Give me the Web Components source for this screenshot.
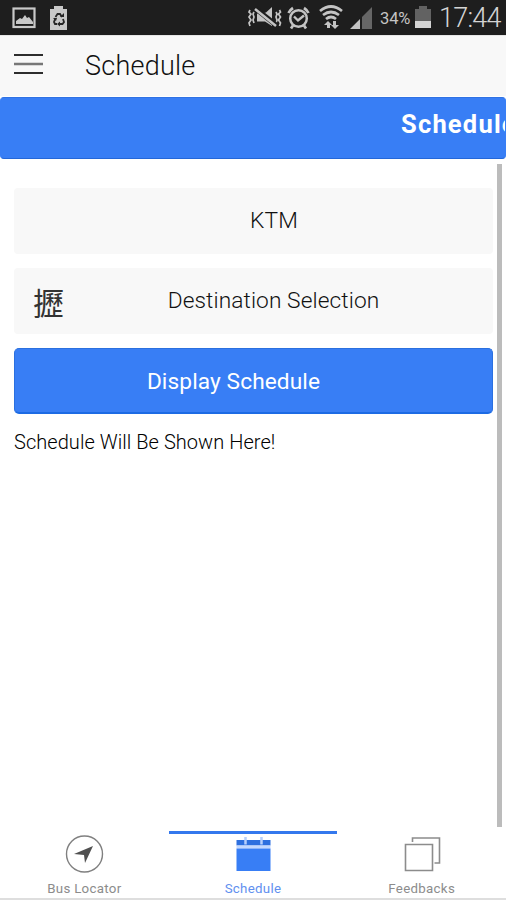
<!DOCTYPE html>
<html lang="en"><head><meta charset="utf-8"><title>Schedule</title>
<style>html,body{margin:0;height:100%;overflow:hidden;background:#fff}body{font-family:Roboto,"Noto Sans CJK TC",sans-serif}</style></head>
<body><bus-app></bus-app>
<script>
const define=(name,html)=>customElements.define(name,class extends HTMLElement{
 constructor(){super();this.attachShadow({mode:'open'}).innerHTML=html;}
});
define('status-bar',`<style>:host{display:flex;height:35px;background:#1e1e1e;color:#c4c4c4;align-items:flex-start}svg{display:block;flex:none}.sp{flex:1}
.pct{font-size:16.5px;line-height:38px;width:33px;margin-left:5px;letter-spacing:-.1px;white-space:nowrap}.time{font-size:27px;line-height:37px;width:67px;letter-spacing:-.75px;font-weight:300;white-space:nowrap;color:#d4d4d4}</style>
<svg width="80" height="35" viewBox="0 0 80 35"><rect x="13.5" y="8.5" width="21" height="18.500" fill="none" stroke="#c8c8c8" stroke-width="2.2"/><path d="M16 24v-3l4-3 2 1 3-4 2 3 2-1 4 5v2z" fill="#c8c8c8"/><path d="M50 9h4V6h9v3h4v21H50z" fill="#c8c8c8"/><g fill="none" stroke="#252525" stroke-width="1.8"><path d="M55.5 17l2-3h2.500l2 3M63 19l1 3-1.500 2h-3M57 24h-2l-1-2 1.500-4"/></g><path d="M60 17h4v-4zM60 21.500v5l-3-2.500zM53 18h4l-1 3z" fill="#252525"/></svg>
<span class="sp"></span>
<svg width="129" height="35" viewBox="245 0 129 35"><g fill="none" stroke="#c4c4c4" stroke-width="1.7"><path d="M249 10l-1 2 2 2-2 3 2 3-2 3 1 3M253 12l-1 2 1 3-1 3 1 3M275 12l1 2-1 3 1 3-1 3M278.500 10l1 2-2 2 2 3-2 3 2 3-1 3"/><circle cx="297.5" cy="18.500" r="8.3" stroke-width="2.5"/><path d="M293 16.500l4 4 6-5" stroke-width="2.4"/><path d="M287.500 13a13 13 0 0 1 4.500-5M303 8a13 13 0 0 1 4.500 5" stroke-width="2.7"/><path d="M292 25.500l-2 3M303 25.500l2 3" stroke-width="2.7"/><path d="M319 11q11-9 22 0M322 15q8-6 16 0M325 19q5-4 10 0" stroke-width="2.7"/></g><path d="M256 13.500h5l4-1 6-5.500v19l-7-4.500h-8z" fill="#c4c4c4"/><path d="M254 8l21 17" stroke="#1e1e1e" stroke-width="5"/><path d="M254 9l21 17" stroke="#c4c4c4" stroke-width="2.5"/><path d="M327 21l4 4h-2v3h-3v-3h-3zM334 29l-4-4h2v-4h3v4h3zM349 29l10-10v10z" fill="#c4c4c4"/><path d="M361 17L371 7v22h-10z" fill="#666"/></svg>
<span class="pct">34%</span>
<svg width="26" height="35" viewBox="412 0 26 35"><path d="M414 9h4V6h8v3h4v13h-16z" fill="#626262"/><path d="M414 21h16v7h-16z" fill="#d4d4d4"/></svg>
<span class="time">17:44</span>`);
define('nav-bar',`<style>:host{display:flex;height:61px;background:#f8f8f8;align-items:center;border-top:1px solid #e6e6e6;box-sizing:border-box}svg{margin:-3px 0 0 14px;flex:none}.t{font-size:27px;font-weight:300;margin-left:41px;line-height:60px;letter-spacing:.25px;color:#111}</style>
<svg width="30" height="24"><path d="M0 2h29M0 20h29" stroke="#2d2d2d" stroke-width="2"/><path d="M0 11h29" stroke="#777" stroke-width="2.500"/></svg><span class="t"><slot></slot></span>`);
define('marquee-bar',`<style>:host{display:flex;box-sizing:border-box;height:62px;margin-top:1px;background:#387ef5;border:1px solid #2f72e4;border-left-color:#387ef5;border-right-color:#387ef5;border-bottom-color:#2467d8;border-radius:4px;overflow:hidden;color:#fff;padding-left:400px}span{font-size:25.5px;font-weight:700;line-height:53px;letter-spacing:1.2px;white-space:nowrap}</style><span><slot></slot></span>`);
define('app-button',`<style>:host{display:grid;grid-template-columns:1fr;box-sizing:border-box;height:66px;background:#f8f8f8;border-radius:4px;color:#111;font-weight:300;position:relative}
:host([primary]){background:#387ef5;color:#fff;border:1px solid #2b70df;border-bottom:2px solid #1c6be4;border-radius:5px;font-weight:400}
.l{text-align:center;font-size:22.700px;line-height:66px;letter-spacing:.1px;padding-left:var(--shift,0);padding-right:var(--back,0);white-space:nowrap}:host([primary]) .l{line-height:65px}
::slotted([slot=icon]){position:absolute;left:19px;top:1px;font:400 31px/65px "Noto Sans CJK TC",sans-serif;color:#333}</style><slot name="icon"></slot><span class="l"><slot></slot></span>`);
define('tab-item',`<style>:host{display:flex;flex:1;flex-direction:column;align-items:center;box-sizing:border-box;border-top:3px solid transparent;height:67px;color:#8c8c8c}:host([active]){border-color:#3478ed;color:#6190ef}
span{font-size:13.3px;line-height:16px;letter-spacing:.3px;margin-top:5px}::slotted(svg){display:block;width:42px;height:42px;flex:none}</style><slot name="icon"></slot><span><slot></slot></span>`);
define('bus-app',`<style>:host{display:flex;flex-direction:column;height:900px;width:506px;overflow:hidden;background:#fff}
main{flex:1;display:flex;padding-top:5px;min-height:0}.body{flex:1;display:flex;flex-direction:column;gap:14px;padding:24px 4px 0 14px}.scroll{width:5px;background:#bcbcbc;margin-right:4px;height:663px}
p{margin:0;font-size:20px;font-weight:300;line-height:28px;color:#000;letter-spacing:.05px}nav{display:flex;height:67px;border-bottom:2px solid #dedede}</style>
<status-bar></status-bar><nav-bar>Schedule</nav-bar><marquee-bar>Schedule</marquee-bar>
<main><div class="body"><app-button style="--shift:41px">KTM</app-button><app-button style="--shift:40px"><span slot="icon">攊</span>Destination Selection</app-button><app-button primary style="--back:40px">Display Schedule</app-button><p>Schedule Will Be Shown Here!</p></div><div class="scroll"></div></main>
<nav><tab-item><svg slot="icon" viewBox="0 0 42 42"><circle cx="21.500" cy="20" r="18" fill="none" stroke="#808080" stroke-width="1.4"/><path d="M30 12l-8 17-1-8-10-1z" fill="#505050"/></svg>Bus Locator</tab-item>
<tab-item active><svg slot="icon" viewBox="0 0 42 42"><path d="M4.500 6h34v5.500h-34z" fill="#2d6fdf"/><path d="M4.500 11.500h34v3h-34z" fill="#c3d8ff"/><path d="M4.500 14.500h34v22.500h-34z" fill="#387ef5"/><path d="M13.500 3v7.500M29.500 3v7.500" stroke="#b7cffc" stroke-width="2.500"/></svg>Schedule</tab-item>
<tab-item><svg slot="icon" viewBox="0 0 42 42" fill="none" stroke="#8c8c8c" stroke-width="1.600"><path d="M4.500 10.500h27v26h-27zM11.500 8V4h27v25h-5"/></svg>Feedbacks</tab-item></nav>`);
</script></body></html>
